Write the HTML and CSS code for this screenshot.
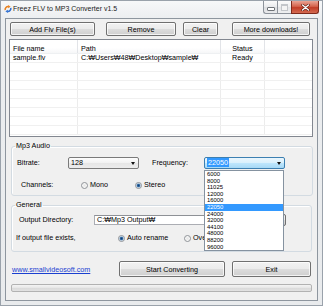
FILE: index.html
```html
<!DOCTYPE html>
<html>
<head>
<meta charset="utf-8">
<title>Freez FLV to MP3 Converter v1.5</title>
<link rel="stylesheet" href="styles.css">
</head>
<body>
<div class="window">
  <div class="titlebar">
    <svg class="appicon" viewBox="0 0 8 8" width="8" height="8">
      <path d="M1.2 5.2 A3 3 0 0 1 4.6 1.6" stroke="#e8801e" stroke-width="1.5" fill="none"/>
      <path d="M4.2 0 L6.6 1.7 L4.1 3.2 Z" fill="#e8801e"/>
      <path d="M6.8 2.8 A3 3 0 0 1 3.4 6.4" stroke="#2f6fd0" stroke-width="1.5" fill="none"/>
      <path d="M3.8 8 L1.4 6.3 L3.9 4.8 Z" fill="#2f6fd0"/>
    </svg>
    <span class="title">Freez FLV to MP3 Converter v1.5</span>
    <div class="caption">
      <span class="cbtn min"><i class="min-glyph"></i></span>
      <span class="cbtn max"><i class="max-glyph"></i></span>
      <span class="cbtn close">
        <svg viewBox="0 0 9 7" width="9" height="7">
          <path d="M1.5 1 L7.5 6 M7.5 1 L1.5 6" stroke="#5a1d12" stroke-width="2.6" stroke-linecap="round"/>
          <path d="M1.5 1 L7.5 6 M7.5 1 L1.5 6" stroke="#ffffff" stroke-width="1.4" stroke-linecap="round"/>
        </svg>
      </span>
    </div>
  </div>
  <div class="client">
    <div class="toolbar">
      <button class="btn b-add">Add Flv File(s)</button>
      <button class="btn b-remove">Remove</button>
      <button class="btn b-clear">Clear</button>
      <button class="btn b-more">More downloads!</button>
    </div>

    <div class="listview">
      <div class="lv-row lv-head">
        <span class="c c1">File name</span>
        <span class="c c2">Path</span>
        <span class="c c3">Status</span>
        <span class="c c4"></span>
      </div>
      <div class="lv-row">
        <span class="c c1">sample.flv</span>
        <span class="c c2">C:₩Users₩48₩Desktop₩sample₩</span>
        <span class="c c3">Ready</span>
        <span class="c c4"></span>
      </div>
      <div class="lv-row"><span class="c c1"></span><span class="c c2"></span><span class="c c3"></span><span class="c c4"></span></div>
      <div class="lv-row"><span class="c c1"></span><span class="c c2"></span><span class="c c3"></span><span class="c c4"></span></div>
      <div class="lv-row"><span class="c c1"></span><span class="c c2"></span><span class="c c3"></span><span class="c c4"></span></div>
      <div class="lv-row"><span class="c c1"></span><span class="c c2"></span><span class="c c3"></span><span class="c c4"></span></div>
      <div class="lv-row"><span class="c c1"></span><span class="c c2"></span><span class="c c3"></span><span class="c c4"></span></div>
      <div class="lv-row"><span class="c c1"></span><span class="c c2"></span><span class="c c3"></span><span class="c c4"></span></div>
      <div class="lv-row"><span class="c c1"></span><span class="c c2"></span><span class="c c3"></span><span class="c c4"></span></div>
      <div class="lv-row"><span class="c c1"></span><span class="c c2"></span><span class="c c3"></span><span class="c c4"></span></div>
    </div>

    <fieldset class="group g-audio">
      <legend>Mp3 Audio</legend>
      <div class="row r-rate">
        <span class="lbl l-bitrate">Bitrate:</span>
        <span class="combo c-bitrate"><span class="cv">128</span><span class="arrow"></span></span>
        <span class="lbl l-freq">Frequency:</span>
        <span class="combo c-freq">
          <span class="cv"><span class="hl">22050</span></span><span class="arrow"></span>
          <span class="dropdown">
            <span class="opt">6000</span>
            <span class="opt">8000</span>
            <span class="opt">11025</span>
            <span class="opt">12000</span>
            <span class="opt">16000</span>
            <span class="opt selected">22050</span>
            <span class="opt">24000</span>
            <span class="opt">32000</span>
            <span class="opt">44100</span>
            <span class="opt">48000</span>
            <span class="opt">88200</span>
            <span class="opt">96000</span>
          </span>
        </span>
      </div>
      <div class="row r-chan">
        <span class="lbl l-chan">Channels:</span>
        <span class="opt-radio o-mono"><span class="radio"></span>Mono</span>
        <span class="opt-radio"><span class="radio checked"></span>Stereo</span>
      </div>
    </fieldset>

    <fieldset class="group g-general">
      <legend>General</legend>
      <div class="row r-out">
        <span class="lbl l-out">Output Directory:</span>
        <span class="textfield">C:₩Mp3 Output₩</span>
        <span class="browse">...</span>
      </div>
      <div class="row r-exist">
        <span class="lbl l-exist">If output file exists,</span>
        <span class="opt-radio o-auto"><span class="radio checked"></span>Auto rename</span>
        <span class="opt-radio"><span class="radio"></span>Overwrite</span>
      </div>
    </fieldset>

    <div class="actions">
      <span class="linkbox"><a class="link" href="#">www.smallvideosoft.com</a></span>
      <button class="btn big b-start">Start Converting</button>
      <button class="btn big b-exit">Exit</button>
    </div>

    <div class="progress"></div>
  </div>
</div>
</body>
</html>
```

FILE: styles.css
```css
html, body {
  margin: 0;
  padding: 0;
}
body {
  width: 323px;
  height: 306px;
  overflow: hidden;
  font-family: "Liberation Sans", Arial, "DejaVu Sans", sans-serif;
  font-size: 7.2px;
  color: #000;
  background: #eceef0;
}

.window {
  box-sizing: border-box;
  width: 323px;
  height: 306px;
  border: 1px solid #9aa2ab;
  background: linear-gradient(#f7f8f9, #eceef0 18px, #e9ebed);
  padding: 0 4px 4px 4px;
  display: flex;
  flex-direction: column;
}

/* title bar */
.titlebar {
  height: 17px;
  flex: none;
  display: flex;
  align-items: flex-start;
}
.appicon {
  flex: none;
  margin: 4px 0 0 -1px;
}
.title {
  margin: 3px 0 0 1px;
  font-size: 7px;
  line-height: 10px;
  color: #1b1b1b;
  white-space: nowrap;
}
.caption {
  margin-left: auto;
  margin-right: -1px;
  display: flex;
}
.cbtn {
  box-sizing: border-box;
  height: 13px;
  display: flex;
  align-items: center;
  justify-content: center;
  border: 1px solid #8d939b;
  border-top: none;
}
.min {
  width: 14px;
  border-radius: 0 0 0 3px;
  border-right: none;
  background: linear-gradient(#fbfbfb, #e9eaec 50%, #dcdee1 50%, #e8e9eb);
}
.max {
  width: 14px;
  border-right: none;
  background: linear-gradient(#fbfbfb, #eeeff0 50%, #e4e5e7 50%, #eeeff0);
}
.close {
  width: 28px;
  border-color: #7e2a1c;
  border-radius: 0 0 3px 0;
  background: linear-gradient(#eaa595, #d4634c 45%, #c23d26 55%, #d36b52);
}
.min-glyph {
  display: block;
  width: 6px;
  height: 2px;
  margin-top: 4px;
  border: 1px solid #6f7378;
  border-radius: 1px;
  background: #fff;
}
.max-glyph {
  display: block;
  width: 5px;
  height: 4px;
  border: 1px solid #c3c6ca;
  border-top-width: 2px;
  background: #f4f4f4;
}

/* client area */
.client {
  flex: 1;
  border: 1px solid #8e969f;
  background: #f0f0f0;
  display: flex;
  flex-direction: column;
}

.btn {
  box-sizing: border-box;
  height: 14px;
  padding: 0;
  margin: 0;
  font-family: inherit;
  font-size: 7.2px;
  color: #000;
  border: 1px solid #707070;
  border-radius: 2px;
  background: linear-gradient(#f2f2f2, #ebebeb 50%, #dddddd 50%, #cfcfcf);
  box-shadow: inset 0 0 0 1px rgba(255,255,255,0.75);
  white-space: nowrap;
}
.toolbar {
  display: flex;
  margin-top: 3px;
  height: 14px;
}
.b-add { margin-left: 4px; width: 85px; }
.b-remove { margin-left: 11px; width: 70px; }
.b-clear { margin-left: 7px; width: 35px; }
.b-more { margin-left: 14px; width: 78px; }

/* list view */
.listview {
  box-sizing: border-box;
  margin: 3px 0 0 3px;
  width: 304px;
  height: 98px;
  border: 1px solid #828790;
  background: #fff;
  overflow: hidden;
}
.lv-row {
  display: flex;
  box-sizing: border-box;
  height: 9px;
  border-bottom: 1px solid #f0f0f0;
}
.c {
  box-sizing: border-box;
  line-height: 8px;
  padding-left: 3px;
  white-space: nowrap;
  overflow: hidden;
  border-right: 1px solid #ececec;
}
.c1 { width: 68px; }
.c2 { width: 143px; }
.c3 { width: 44px; text-align: center; padding-left: 0; }
.c4 { flex: 1; border-right: none; }
.lv-head {
  height: 14px;
  border-bottom: 1px solid #eef0f2;
  background: linear-gradient(#ffffff, #ffffff 60%, #f6f7f8);
}
.lv-head .c {
  padding-top: 5px;
  border-right-color: #e2e4e8;
}

/* group boxes */
.group {
  box-sizing: border-box;
  margin: 5px 0 0 5px;
  padding: 0 0 4px 0;
  min-width: 0;
  border: 1px solid #d3dbe2;
  border-radius: 3px;
  box-shadow: inset 1px 1px 0 #fff;
}
.group legend {
  margin-left: 3px;
  padding: 0 1px;
  line-height: 8px;
  font-size: 7.2px;
}
.g-audio { width: 302px; }
.g-general { width: 301px; padding-bottom: 7px; }

.row {
  display: flex;
  align-items: center;
  height: 12px;
}
.lbl {
  flex: none;
  line-height: 8px;
  white-space: nowrap;
}
.r-rate { margin-top: 7px; }
.l-bitrate { margin-left: 5px; width: 51px; }
.l-freq { margin-left: 13px; width: 52px; }

.combo {
  box-sizing: border-box;
  height: 12px;
  display: flex;
  align-items: center;
  border: 1px solid #7a7a7a;
  border-radius: 2px;
  background: linear-gradient(#fdfdfd, #f1f1f1 50%, #e6e6e6 50%, #ececec);
  flex: none;
}
.cv {
  flex: 1;
  padding-left: 2px;
  line-height: 8px;
}
.arrow {
  width: 0;
  height: 0;
  margin-right: 3px;
  border-left: 2.5px solid transparent;
  border-right: 2.5px solid transparent;
  border-top: 3px solid #111;
}
.c-bitrate { width: 71px; }
.c-freq {
  width: 81px;
  position: relative;
  border-color: #3c7fb1;
  background: linear-gradient(#eaf6fd, #d9f0fc 50%, #bee6fd 50%, #a7d9f5);
}
.hl {
  background: #3399ff;
  color: #fff;
  padding: 0 1px;
}

.dropdown {
  position: absolute;
  z-index: 10;
  left: -1px;
  top: 12px;
  box-sizing: border-box;
  width: 80px;
  border: 1px solid #8592a0;
  background: #fff;
  display: flex;
  flex-direction: column;
}
.opt {
  display: block;
  height: 6.6px;
  line-height: 6.6px;
  font-size: 5.9px;
  padding-left: 2px;
  white-space: nowrap;
}
.opt.selected {
  background: #3399ff;
  color: #fff;
}

.r-chan { margin-top: 10px; }
.l-chan { margin-left: 9px; width: 60px; }
.opt-radio {
  display: flex;
  align-items: center;
  line-height: 8px;
  white-space: nowrap;
  flex: none;
}
.o-mono { width: 54px; }
.radio {
  box-sizing: border-box;
  width: 7px;
  height: 7px;
  margin-right: 2px;
  border-radius: 50%;
  border: 1px solid #8f9398;
  background: radial-gradient(circle, #e6e6e6 0, #f8f8f8 70%);
  flex: none;
}
.radio.checked {
  background: radial-gradient(circle, #163e6c 0, #2f6aa7 1.3px, #cfdde9 2.2px, #f6f6f6 100%);
}

.r-out { margin-top: 5px; }
.l-out { margin-left: 7px; width: 75px; }
.textfield {
  box-sizing: border-box;
  width: 176px;
  height: 10px;
  border: 1px solid #abadb3;
  border-top-color: #8e9196;
  background: #fff;
  line-height: 8px;
  padding-left: 2px;
  white-space: nowrap;
  flex: none;
}
.browse {
  box-sizing: border-box;
  margin-left: 2px;
  width: 14px;
  height: 12px;
  border: 1px solid #707070;
  border-radius: 2px;
  background: linear-gradient(#f2f2f2, #ebebeb 50%, #dddddd 50%, #cfcfcf);
  text-align: center;
  line-height: 9px;
  flex: none;
}

.r-exist { margin-top: 6px; }
.l-exist { margin-left: 4px; width: 102px; }
.o-auto { width: 66px; }

/* bottom */
.actions {
  display: flex;
  align-items: center;
  margin-top: 9px;
  height: 16px;
}
.linkbox {
  margin-left: 6px;
  width: 107px;
  flex: none;
}
.link {
  color: #1a3fd0;
  text-decoration: underline;
  white-space: nowrap;
}
.big { height: 16px; }
.b-start { width: 106px; }
.b-exit { margin-left: 7px; width: 79px; }

.progress {
  box-sizing: border-box;
  margin: 7px 0 0 5px;
  width: 301px;
  height: 8px;
  border: 1px solid #b2b2b2;
  border-radius: 2px;
  background: linear-gradient(#f4f4f4, #e6e6e6 50%, #dadada 50%, #e2e2e2);
}
```
